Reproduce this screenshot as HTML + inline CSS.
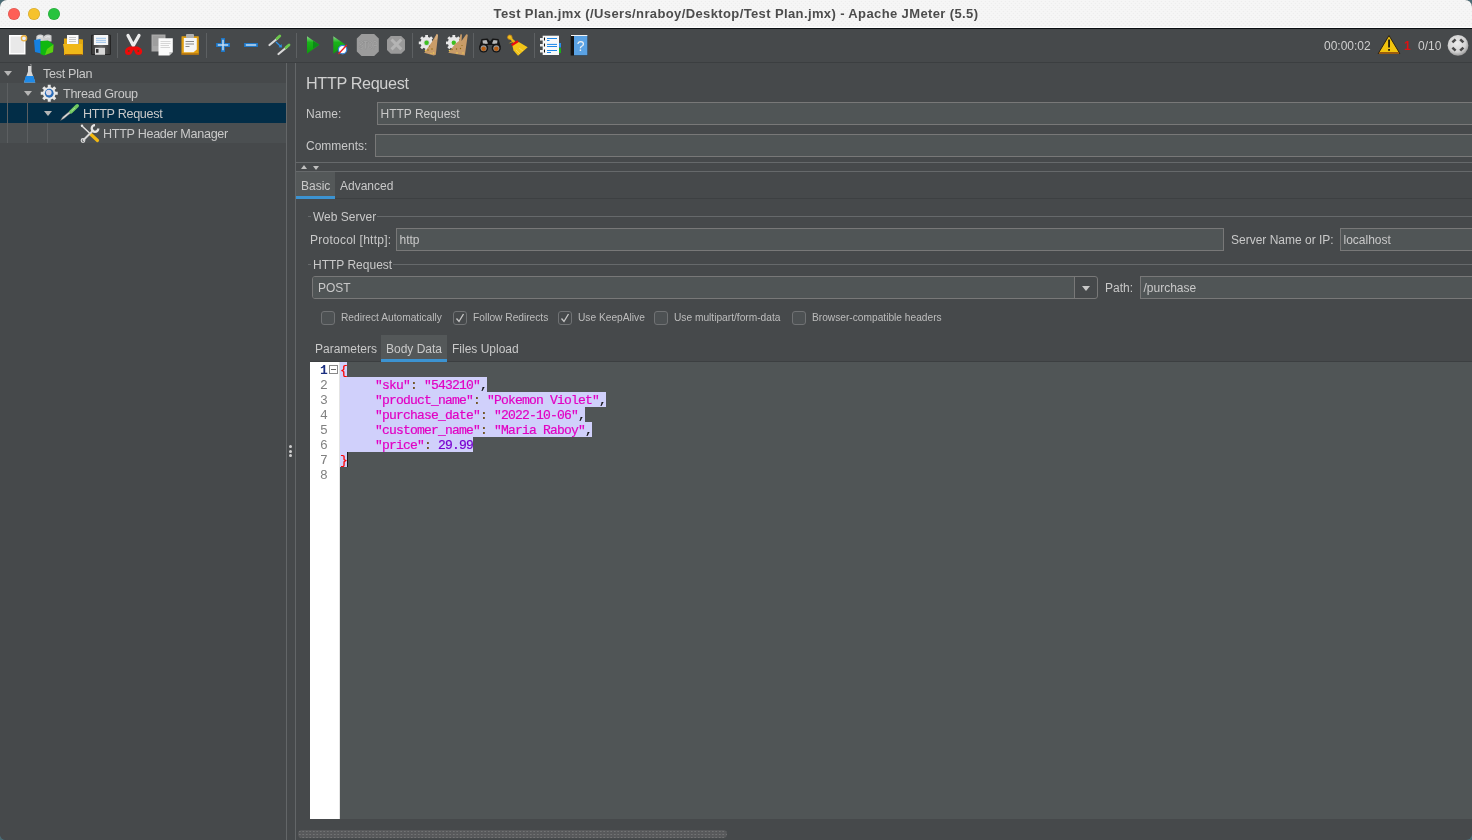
<!DOCTYPE html>
<html><head><meta charset="utf-8">
<style>
*{margin:0;padding:0;box-sizing:border-box}
html,body{width:1472px;height:840px;overflow:hidden;background:#4a6b75}
body{font-family:"Liberation Sans",sans-serif;color:#c9c9c9;position:relative}
.a{position:absolute}
#win{will-change:transform;position:absolute;left:0;top:0;width:1472px;height:840px;background:#46494b;border-radius:7px 7px 6px 6px;overflow:hidden}
#title{position:absolute;left:0;top:0;width:1472px;height:29px;background:radial-gradient(circle at 1.5px 1.5px,#ededed 0.6px,transparent 1.1px) 0 0/4px 4px,radial-gradient(circle at 1.5px 1.5px,#ededed 0.6px,transparent 1.1px) 2px 2px/4px 4px,#f6f6f6;border-bottom:1px solid #0b1013}
#title:after{content:"";position:absolute;left:0;top:27px;width:1472px;height:1px;background:#fff}
#title .t{position:absolute;left:0;width:1472px;top:6px;text-align:center;font-size:13px;font-weight:bold;color:#4c4c4c;letter-spacing:0.38px;white-space:nowrap}
.tl{position:absolute;top:8px;width:12px;height:12px;border-radius:50%;box-shadow:inset 0 0 0 0.6px rgba(0,0,0,0.14)}
#toolbar{position:absolute;left:0;top:29px;width:1472px;height:34px;background:#46494b;border-bottom:1px solid #3b3e40}
.sep{position:absolute;top:4px;width:1px;height:25px;background:#5d6062}
.ico{position:absolute;overflow:visible}
.tree{position:absolute;left:0;top:63px;width:286px;height:777px;background:#46494b}
.row{position:absolute;left:0;width:286px;height:20px}
.vl{position:absolute;width:1px;background:#5c5f61}
.tri{position:absolute;width:0;height:0;border-left:4px solid transparent;border-right:4px solid transparent;border-top:5px solid #b5b5b5}
.lbl{position:absolute;font-size:12px;line-height:14px;color:#c9c9c9;white-space:nowrap}
.tl2{font-size:12.6px;letter-spacing:-0.3px}
.fld{position:absolute;background:#505556;border:1px solid #787878;font-size:12px;line-height:21px;padding-top:1px;color:#c9c9c9;white-space:nowrap;padding-left:2.5px;overflow:hidden}
.cbl{position:absolute;font-size:10.2px;line-height:12px;color:#bdbdbd;white-space:nowrap;top:312px}
.cb{position:absolute;top:311px;width:14px;height:14px;border:1px solid #707274;border-radius:3px;background:#4d5153}
.hl{position:absolute;height:1px;background:#66696b}
.mono{font-family:"Liberation Mono",monospace;font-size:13px;letter-spacing:-0.8px;line-height:15px;white-space:pre}
.code{position:absolute;left:340px;color:#000;-webkit-text-stroke:0.2px}
.s{color:#e200c4;-webkit-text-stroke-color:#e200c4}
.n{color:#7800d0;-webkit-text-stroke-color:#7800d0}
.b{color:#ff0000;-webkit-text-stroke-color:#ff0000}
.p{color:#111;-webkit-text-stroke-color:#111}
.c{color:#6a4a12;-webkit-text-stroke-color:#6a4a12}
.sel{position:absolute;background:#d0d0fb;height:15px}
.ln{position:absolute;left:310px;width:17px;text-align:right;color:#808080}
</style></head><body>
<div id="win">
  <div id="title">
    <div class="tl" style="left:8px;background:#fe5f57"></div>
    <div class="tl" style="left:28px;background:#f6c22c"></div>
    <div class="tl" style="left:48px;background:#27c33f"></div>
    <div class="t">Test Plan.jmx (/Users/nraboy/Desktop/Test Plan.jmx) - Apache JMeter (5.5)</div>
  </div>
  <div id="toolbar">
    <div class="sep" style="left:117px"></div>
    <div class="sep" style="left:206px"></div>
    <div class="sep" style="left:296px"></div>
    <div class="sep" style="left:412px"></div>
    <div class="sep" style="left:473px"></div>
    <div class="sep" style="left:534px"></div>
    <!-- TOOLBAR ICONS -->
    <div class="lbl" style="left:1324px;top:10px;font-size:12px;color:#cfcfcf">00:00:02</div>
    <div class="lbl" style="left:1404px;top:10px;font-size:12px;color:#e01010;font-weight:bold">1</div>
    <div class="lbl" style="left:1418px;top:10px;font-size:12px;color:#cfcfcf">0/10</div>
  </div>
  <div class="tree">
    <div class="row" style="top:20px;background:#4b4f51"></div>
    <div class="row" style="top:40px;background:#022d47"></div>
    <div class="row" style="top:60px;background:#4b4f51"></div>
    <div class="vl" style="left:7px;top:20px;height:60px"></div>
    <div class="vl" style="left:27px;top:40px;height:40px"></div>
    <div class="vl" style="left:47px;top:60px;height:20px"></div>
    <div class="tri" style="left:4px;top:8px"></div>
    <div class="tri" style="left:24px;top:28px"></div>
    <div class="tri" style="left:44px;top:48px"></div>
    <!-- TREE ICONS -->
    <div class="lbl tl2" style="left:43px;top:4px">Test Plan</div>
    <div class="lbl tl2" style="left:63px;top:24px">Thread Group</div>
    <div class="lbl tl2" style="left:83px;top:44px">HTTP Request</div>
    <div class="lbl tl2" style="left:103px;top:64px">HTTP Header Manager</div>
  </div>
  <div class="a" style="left:286px;top:63px;width:1px;height:777px;background:#636668"></div>
  <div class="a" style="left:295px;top:63px;width:1px;height:777px;background:#636668"></div>
  <div class="a" style="left:289px;top:445px;width:3px;height:3px;border-radius:50%;background:#cfcfcf"></div>
  <div class="a" style="left:289px;top:450px;width:3px;height:3px;border-radius:50%;background:#cfcfcf"></div>
  <div class="a" style="left:289px;top:454px;width:3px;height:3px;border-radius:50%;background:#cfcfcf"></div>

  <!-- RIGHT PANEL -->
  <div class="lbl" style="left:306px;top:74px;font-size:16.2px;line-height:18px;letter-spacing:-0.35px;color:#d0d0d0">HTTP Request</div>
  <div class="lbl" style="left:306px;top:107px">Name:</div>
  <div class="fld" style="left:377px;top:102px;width:1100px;height:23px">HTTP Request</div>
  <div class="lbl" style="left:306px;top:139px">Comments:</div>
  <div class="fld" style="left:375px;top:134px;width:1100px;height:23px"></div>
  <div class="hl" style="left:296px;top:162px;width:1176px"></div>
  <div class="a" style="left:301px;top:165px;width:0;height:0;border-left:3.5px solid transparent;border-right:3.5px solid transparent;border-bottom:4px solid #c0c0c0"></div>
  <div class="a" style="left:313px;top:166px;width:0;height:0;border-left:3.5px solid transparent;border-right:3.5px solid transparent;border-top:4px solid #c0c0c0"></div>
  <div class="hl" style="left:296px;top:171px;width:1176px"></div>
  <div class="a" style="left:296px;top:198px;width:1176px;height:1px;background:#3d4042"></div>
  <div class="a" style="left:296px;top:172px;width:39px;height:27px;background:#545859"></div>
  <div class="a" style="left:296px;top:196px;width:39px;height:3px;background:#3c93d1"></div>
  <div class="lbl" style="left:301px;top:179px">Basic</div>
  <div class="lbl" style="left:340px;top:179px">Advanced</div>

  <div class="hl" style="left:308px;top:216px;width:3px"></div>
  <div class="hl" style="left:377px;top:216px;width:1095px"></div>
  <div class="lbl" style="left:313px;top:210px">Web Server</div>
  <div class="lbl" style="left:310px;top:233px;letter-spacing:0.25px">Protocol [http]:</div>
  <div class="fld" style="left:396px;top:228px;width:828px;height:23px">http</div>
  <div class="lbl" style="left:1231px;top:233px">Server Name or IP:</div>
  <div class="fld" style="left:1340px;top:228px;width:200px;height:23px">localhost</div>

  <div class="hl" style="left:308px;top:264px;width:3px"></div>
  <div class="hl" style="left:393px;top:264px;width:1079px"></div>
  <div class="lbl" style="left:313px;top:258px">HTTP Request</div>
  <div class="a" style="left:312px;top:276px;width:786px;height:23px;border:1px solid #787878;border-radius:3px;background:#46494b;overflow:hidden">
    <div class="a" style="left:0;top:0;width:762px;height:21px;background:#505556;border-right:1px solid #787878"></div>
    <div class="a" style="left:5px;top:4px;font-size:12px;line-height:14px;color:#c9c9c9">POST</div>
    <div class="a" style="left:769px;top:9px;width:0;height:0;border-left:4.5px solid transparent;border-right:4.5px solid transparent;border-top:5px solid #c8c8c8"></div>
  </div>
  <div class="lbl" style="left:1105px;top:281px">Path:</div>
  <div class="fld" style="left:1140px;top:276px;width:400px;height:23px">/purchase</div>

  <div class="cb" style="left:321px"></div>
  <div class="cbl" style="left:341px">Redirect Automatically</div>
  <div class="cb" style="left:453px;background:#46494b"></div>
  <div class="cbl" style="left:473px">Follow Redirects</div>
  <div class="cb" style="left:558px;background:#46494b"></div>
  <div class="cbl" style="left:578px">Use KeepAlive</div>
  <div class="cb" style="left:654px"></div>
  <div class="cbl" style="left:674px">Use multipart/form-data</div>
  <div class="cb" style="left:792px"></div>
  <div class="cbl" style="left:812px">Browser-compatible headers</div>
  <svg class="a" style="left:453px;top:311px" width="14" height="14"><path d="M3.5 7.5 L6 10.5 L10.5 3" fill="none" stroke="#c8c8c8" stroke-width="1.3"/></svg>
  <svg class="a" style="left:558px;top:311px" width="14" height="14"><path d="M3.5 7.5 L6 10.5 L10.5 3" fill="none" stroke="#c8c8c8" stroke-width="1.3"/></svg>

  <div class="a" style="left:310px;top:361px;width:1162px;height:1px;background:#3c3f41"></div>
  <div class="a" style="left:381px;top:335px;width:66px;height:27px;background:#545859"></div>
  <div class="a" style="left:381px;top:359px;width:66px;height:3px;background:#3c93d1"></div>
  <div class="lbl" style="left:315px;top:342px">Parameters</div>
  <div class="lbl" style="left:386px;top:342px">Body Data</div>
  <div class="lbl" style="left:452px;top:342px">Files Upload</div>

  <!-- EDITOR -->
  <div class="a" style="left:310px;top:362px;width:1162px;height:457px;background:#505556"></div>
  <div class="a" style="left:310px;top:362px;width:30px;height:457px;background:#ffffff;border-right:1px solid #e4e4e4"></div>
  <div class="sel" style="left:340px;top:362px;width:7px"></div>
  <div class="sel" style="left:340px;top:377px;width:147px"></div>
  <div class="sel" style="left:340px;top:392px;width:266px"></div>
  <div class="sel" style="left:340px;top:407px;width:245px"></div>
  <div class="sel" style="left:340px;top:422px;width:252px"></div>
  <div class="sel" style="left:340px;top:437px;width:133px"></div>
  <div class="sel" style="left:340px;top:452px;width:7px"></div>
  <div class="mono ln" style="top:363px;color:#1b2f80;font-weight:bold">1</div>
  <div class="mono ln" style="top:378px">2</div>
  <div class="mono ln" style="top:393px">3</div>
  <div class="mono ln" style="top:408px">4</div>
  <div class="mono ln" style="top:423px">5</div>
  <div class="mono ln" style="top:438px">6</div>
  <div class="mono ln" style="top:453px">7</div>
  <div class="mono ln" style="top:468px">8</div>
  <div class="a" style="left:329px;top:365px;width:9px;height:9px;border:1px solid #8a8a8a;background:#fff"></div>
  <div class="a" style="left:331px;top:369px;width:5px;height:1px;background:#6a6a6a"></div>
  <div class="mono code" style="top:363px"><span class="b">{</span></div>
  <div class="mono code" style="top:378px">     <span class="s">"sku"</span><span class="c">: </span><span class="s">"543210"</span><span class="p">,</span></div>
  <div class="mono code" style="top:393px">     <span class="s">"product_name"</span><span class="c">: </span><span class="s">"Pokemon Violet"</span><span class="p">,</span></div>
  <div class="mono code" style="top:408px">     <span class="s">"purchase_date"</span><span class="c">: </span><span class="s">"2022-10-06"</span><span class="p">,</span></div>
  <div class="mono code" style="top:423px">     <span class="s">"customer_name"</span><span class="c">: </span><span class="s">"Maria Raboy"</span><span class="p">,</span></div>
  <div class="mono code" style="top:438px">     <span class="s">"price"</span><span class="c">: </span><span class="n">29.99</span></div>
  <div class="mono code" style="top:453px"><span class="b">}</span></div>
  <div class="a" style="left:347px;top:452px;width:1px;height:15px;background:#1a1a1a"></div>

  <svg class="a" style="left:0;top:0" width="1472" height="150" viewBox="0 0 1472 150">
<defs>
<linearGradient id="gPlay" x1="0" y1="0" x2="0" y2="1"><stop offset="0" stop-color="#8fd88f"/><stop offset="0.35" stop-color="#19b419"/><stop offset="1" stop-color="#0f9a0f"/></linearGradient>
<radialGradient id="gCirc" cx="0.45" cy="0.4" r="0.6"><stop offset="0" stop-color="#ececec"/><stop offset="0.7" stop-color="#d2d2d2"/><stop offset="1" stop-color="#9a9a9a"/></radialGradient>
</defs>
<!-- New -->
<rect x="9" y="35" width="16.5" height="19.5" fill="#ffffff"/>
<rect x="10.5" y="36.5" width="13.5" height="16.5" fill="#e9e9e9"/>
<circle cx="24" cy="38.3" r="2.6" fill="#e8f0ff" stroke="#e8b040" stroke-width="1.4"/>
<!-- Templates -->
<path d="M36 41 L36.5 36 Q40 33.5 43.5 35.5 L44.5 41 Z" fill="#d4d4d4"/>
<path d="M43.5 41 L44 36 Q47.5 33.5 51.5 35.5 L51.5 41.5 Z" fill="#cdcdcd"/>
<path d="M38 37.5 Q40 36 42.5 37 M45.5 37.5 Q47.5 36 50 37" stroke="#f2f2f2" stroke-width="0.8" fill="none"/>
<path d="M34 40 L40.5 39 L41 53.5 L35 52 Z" fill="#1580e0"/>
<path d="M40.5 41 L48 40.5 L53.5 44.5 L53 52 L44 55.5 L40.5 54 Z" fill="#10b810"/>
<path d="M47 49 L53.5 44.5 L53 52 L45 55 Z" fill="#5cd010"/>
<!-- Open -->
<path d="M64 38.5 L67 38.5 L67 44 L79 44 L79 39 L83 39.5 L83 54.5 L64 55 Z" fill="#e2a810"/>
<rect x="67" y="35" width="11.5" height="9" fill="#fafafa"/>
<path d="M69 37.5 H76 M69 39.5 H76 M69 41.5 H76" stroke="#bbb" stroke-width="0.8"/>
<path d="M63 44 L82 44 L82.5 54.5 L65 55 Z" fill="#f0b818"/>
<path d="M65 54 L82 54 L82 55.3 L65 55.3 Z" fill="#9a5a10"/>
<!-- Save -->
<linearGradient id="gFl" x1="0" y1="0" x2="1" y2="0"><stop offset="0" stop-color="#3a3a3a"/><stop offset="0.5" stop-color="#666"/><stop offset="1" stop-color="#3a3a3a"/></linearGradient>
<rect x="91" y="34.8" width="20" height="20.2" rx="1" fill="#262626"/>
<rect x="92" y="35.8" width="18" height="18.2" fill="url(#gFl)"/>
<rect x="93.8" y="35" width="14.4" height="10" fill="#f6f6f6"/>
<path d="M96 38.3 H106 M96 40.3 H106 M96 42.3 H106" stroke="#8ebbe8" stroke-width="0.9"/>
<rect x="95" y="47.8" width="10" height="7" fill="#d8d8d8"/>
<rect x="96" y="49" width="2.5" height="3.8" fill="#333"/>
<!-- Cut -->
<path d="M128 35.5 L133.3 45.5 M139 35.5 L133.3 45.5" stroke="#ececec" stroke-width="3.3" stroke-linecap="round"/>
<path d="M129.5 46.5 L137.5 46.5 Q142.2 48 142.2 51.5 Q141.8 55 138.5 55 Q135.5 55 134.6 51.5 L133.5 49.5 L132.4 51.5 Q131.5 55 128.5 55 Q125 55 125 51.5 Q125 48 129.5 46.5 Z" fill="#ee0a0a"/>
<circle cx="128.8" cy="51" r="1" fill="#6a4010"/>
<circle cx="138.3" cy="51" r="1" fill="#6a4010"/>
<!-- Copy -->
<rect x="151.5" y="34.5" width="14" height="17" fill="#a8a8a8"/>
<path d="M153 37 H164 M153 39 H164 M153 41 H164 M153 43 H164 M153 45 H164" stroke="#8c8c8c" stroke-width="0.7"/>
<path d="M158.5 38.2 L172.8 38.2 L172.8 52 L169.3 55.5 L158.5 55.5 Z" fill="#fafafa"/>
<path d="M169.3 55.5 L169.3 52 L172.8 52 Z" fill="#c8c8c8"/>
<path d="M160.5 41.5 H170.5 M160.5 43.5 H170.5 M160.5 45.5 H169 M160.5 47.5 H170" stroke="#c4c4c4" stroke-width="0.7"/>
<!-- Paste -->
<rect x="181.5" y="36.2" width="17.3" height="18.5" rx="0.5" fill="#e29f10"/>
<path d="M181.5 54 H198.8" stroke="#9a5a10" stroke-width="1"/>
<path d="M183.8 38 L196.8 38 L196.8 49.5 L193.5 52.3 L183.8 52.3 Z" fill="#f6f6f6"/>
<rect x="186" y="34" width="8" height="4" rx="1" fill="#b0b0b0"/>
<path d="M185.5 41.5 H194 M185.5 44 H194 M185.5 46.5 H189.5" stroke="#8a8a8a" stroke-width="1"/>
<!-- Plus / Minus -->
<path d="M218 45 H228 M223 40 V50" stroke="#1f78c8" stroke-width="3.9" stroke-linecap="square"/>
<path d="M246 45 H256" stroke="#1f78c8" stroke-width="3.9" stroke-linecap="square"/>
<path d="M217.8 45 H228.2 M223 39.8 V50.2" stroke="#c4dcf2" stroke-width="1.5"/>
<path d="M245.8 45 H256.2" stroke="#c4dcf2" stroke-width="1.5"/>
<!-- Toggle pipettes -->
<path d="M269.5 45 L278 38" stroke="#d8d8d8" stroke-width="2.2" stroke-linecap="round"/>
<path d="M277 38.5 L279.8 36" stroke="#6cc84c" stroke-width="2.8" stroke-linecap="round"/>
<path d="M278.5 54 L287 47" stroke="#d8d8d8" stroke-width="2.2" stroke-linecap="round"/>
<path d="M286 47.5 L289 45" stroke="#6cc84c" stroke-width="2.8" stroke-linecap="round"/>
<path d="M276 42 L280.5 46.3" stroke="#2a90e8" stroke-width="1.2"/>
<path d="M278.5 47.2 L282 47.5 L281.5 44 Z" fill="#2a90e8"/>
<!-- Start -->
<path d="M307 36.2 L319.2 44.8 L307 53.8 Z" fill="url(#gPlay)"/>
<path d="M313 48.5 L319.2 44.8 L313 41 Z" fill="#0c8a18"/>
<!-- Start no pauses -->
<path d="M333.3 36.2 L345.5 44.8 L333.3 53.8 Z" fill="url(#gPlay)"/>
<circle cx="342.6" cy="49.6" r="4.2" fill="#ffffff" stroke="#3a86d8" stroke-width="1.2"/>
<path d="M338.5 54 L346.8 45" stroke="#ee2020" stroke-width="1.3"/>
<!-- Stop -->
<path d="M361.5 34 L374.2 34 L378.8 38.6 L378.8 51.4 L374.2 56 L361.5 56 L356.8 51.4 L356.8 38.6 Z" fill="#9c9c9c"/>
<text x="368" y="49.4" text-anchor="middle" font-family="Liberation Sans" font-weight="bold" font-size="11.5" fill="#aaaaaa" stroke="#8c8c8c" stroke-width="0.5" letter-spacing="-0.9" textLength="18.5" lengthAdjust="spacingAndGlyphs">STOP</text>
<!-- Shutdown -->
<path d="M390.8 36 L401.2 36 L405 39.8 L405 50 L401.2 53.8 L390.8 53.8 L387 50 L387 39.8 Z" fill="#9a9a9a"/>
<path d="M391.5 39.5 L401.3 49.4 M401.3 39.5 L391.5 49.4" stroke="#b4b4b4" stroke-width="3"/>
<!-- Clear -->
<circle cx="426.6" cy="42.8" r="6" fill="#e8e8e8"/>
<g stroke="#e8e8e8" stroke-width="2.8"><path d="M426.6 35 V50.6 M418.8 42.8 H434.4 M421.1 37.3 L432.1 48.3 M432.1 37.3 L421.1 48.3"/></g>
<circle cx="426.6" cy="42.8" r="3" fill="#cfcfcf"/>
<circle cx="426.6" cy="42.8" r="2.2" fill="#3cc020"/>
<path d="M436.5 34.3 L438 34.8 L437.5 40 L435.8 54.8 L433.8 55.4 L424.2 52.7 L431.5 42.5 Z" fill="#c99c68"/>
<path d="M436.5 34.3 L438 34.8 L437 39.5 L434.5 40 Z" fill="#d8b080"/>
<g fill="#8a6a10"><circle cx="428" cy="50" r="0.7"/><circle cx="432" cy="49" r="0.7"/><circle cx="429.5" cy="46" r="0.6"/></g>
<g fill="#f0d050"><circle cx="425.5" cy="50.5" r="0.8"/><circle cx="433.5" cy="53" r="0.8"/><circle cx="431" cy="53.5" r="0.6"/></g>
<!-- Clear all -->
<circle cx="453.8" cy="42.8" r="6" fill="#e8e8e8"/>
<g stroke="#e8e8e8" stroke-width="2.8"><path d="M453.8 35 V50.6 M446 42.8 H461.6 M448.3 37.3 L459.3 48.3 M459.3 37.3 L448.3 48.3"/></g>
<circle cx="453.8" cy="42.8" r="2.2" fill="#3cc020"/>
<path d="M460.5 34.3 L462 34.6 L461.5 41 L466.3 34.3 L467.8 34.8 L464.8 55.4 L448.3 52.7 L455.5 43.5 L459 41 Z" fill="#c99c68"/>
<g fill="#8a6a10"><circle cx="452" cy="49.5" r="0.7"/><circle cx="456.5" cy="49" r="0.7"/><circle cx="460.5" cy="48.5" r="0.7"/><circle cx="462" cy="45.5" r="0.6"/></g>
<g fill="#f0d050"><circle cx="449.5" cy="50.5" r="0.8"/><circle cx="457" cy="53" r="0.8"/><circle cx="463" cy="53" r="0.7"/></g>
<!-- Binoculars -->
<path d="M481.5 39 L487.5 38.5 L490 41.5 L492.5 38.5 L498.5 39 L500.8 47 L497 45 L490 45 L483 45 L479.2 47 Z" fill="#151515"/>
<path d="M482.5 40.5 L486.5 40 L488 43.5 L483 44.5 Z" fill="#b8b8b8"/>
<path d="M493.5 40 L497.5 40.5 L497 44.5 L492 43.5 Z" fill="#b8b8b8"/>
<circle cx="483.6" cy="48" r="4.6" fill="#151515"/>
<circle cx="496.3" cy="48" r="4.6" fill="#151515"/>
<circle cx="483.6" cy="48.3" r="3" fill="#9a9a9a"/>
<circle cx="496.3" cy="48.3" r="3" fill="#9a9a9a"/>
<circle cx="483.6" cy="48.8" r="2.3" fill="#b85e12"/>
<circle cx="496.3" cy="48.8" r="2.3" fill="#b85e12"/>
<!-- Broom -->
<circle cx="509.8" cy="37.2" r="2.3" fill="#f0c020" stroke="#b87818" stroke-width="0.8"/>
<path d="M510.5 38 L515 43" stroke="#e8b818" stroke-width="2.2"/>
<path d="M508.5 43.5 L514 40 L515 41.5 Z" fill="#e8b010"/>
<path d="M511 44.2 L517.3 40.2 L519 42.5 L512.8 46.5 Z" fill="#e80a10"/>
<path d="M512.5 46 L518.8 42 L527.7 47.2 L518 55.7 L513.5 50.5 Z" fill="#f2c418"/>
<path d="M519 48 L523 51 M516 50 L520 54" stroke="#f8dc70" stroke-width="0.7"/>
<!-- Function helper -->
<rect x="542.7" y="35.7" width="16.3" height="19.3" fill="#f8f8f8"/>
<rect x="559" y="43" width="2" height="4.5" fill="#2a8ee8"/>
<rect x="559" y="48" width="2" height="5" fill="#18b018"/>
<g fill="#e8e8e8"><rect x="540" y="38" width="4" height="2.5"/><rect x="540" y="44" width="4" height="2.5"/><rect x="540" y="50" width="4" height="2.5"/></g>
<g fill="#111"><rect x="544" y="37.5" width="1" height="3"/><rect x="544" y="43.5" width="1" height="3"/><rect x="544" y="49.5" width="1" height="3"/></g>
<path d="M547 38.5 H557 M547 40.5 H549.5 M547 44.4 H557 M547 46.5 H557 M547 50.5 H557 M547 52.5 H551" stroke="#1a86e8" stroke-width="1"/>
<!-- Help -->
<rect x="570.7" y="35" width="16.7" height="20.5" fill="#141414"/>
<rect x="574" y="35.8" width="13.4" height="19.5" fill="#5aa2e4"/>
<rect x="571" y="35" width="16.4" height="1" fill="#f4f4f4"/>
<text x="580.6" y="50.5" text-anchor="middle" font-family="Liberation Sans" font-size="14" fill="#f0f0f0">?</text>
<!-- Warning -->
<path d="M1389 35.5 L1399.8 53.5 L1378.2 53.5 Z" fill="#f2c40e" stroke="#2a2010" stroke-width="1" stroke-linejoin="round"/>
<rect x="1379" y="52" width="20" height="2" fill="#9a5a10"/>
<rect x="1388.2" y="39.5" width="1.7" height="8" fill="#111"/>
<rect x="1388.2" y="49" width="1.7" height="1.8" fill="#111"/>
<!-- Circle -->
<circle cx="1458" cy="45.4" r="10.4" fill="url(#gCirc)"/>
<g stroke="#4a4a4a" stroke-width="2.6"><path d="M1452.4 42.4 L1455.6 39.4 M1460.2 39.4 L1463.4 42.4 M1452.4 47.6 L1455.6 50.6 M1460.2 50.6 L1463.4 47.6"/></g>

<!-- TREE ICONS -->
<!-- flask -->
<path d="M28 66 L31.5 66 L31.5 71.5 L35.3 82.5 L24 82.5 L28 71.5 Z" fill="#d6d6d6"/>
<path d="M29.5 64.5 L31.5 64.2 L31.5 66 Z" fill="#aaa"/>
<path d="M25.8 76 L33.5 76 L35.3 82.5 L24 82.5 Z" fill="#1e8ae8"/>
<!-- gear -->
<g transform="translate(49.25 93.25)">
<circle r="6.3" fill="#e8e8e8"/>
<g stroke="#e8e8e8" stroke-width="3"><path d="M0 -8.5 V8.5 M-8.5 0 H8.5 M-6 -6 L6 6 M6 -6 L-6 6"/></g>
<circle r="4.4" fill="#2a6cb8"/>
<circle r="2.8" cx="-0.5" cy="-0.8" fill="#d8d8e8"/>
</g>
<!-- pipette -->
<path d="M60.5 120.5 L62.5 117 L70.5 110.5 L72 112 L64 118.5 Z" fill="#d8d8d8" stroke="#555" stroke-width="0.5"/>
<path d="M71 111.8 L77.2 105.8" stroke="#70c860" stroke-width="3.6" stroke-linecap="round"/>
<path d="M71.5 111 L75 108" stroke="#a8e098" stroke-width="1"/>
<!-- wrench & screwdriver -->
<circle cx="82" cy="125.8" r="1.2" fill="#e8e8e8"/>
<path d="M82 126 L90.5 134" stroke="#e0e0e0" stroke-width="1.5" stroke-linecap="round"/>
<path d="M90.5 134 L97.5 140.5" stroke="#f2b810" stroke-width="3.2" stroke-linecap="round"/>
<path d="M83.5 140 L93 130.5" stroke="#d8d8d8" stroke-width="2" stroke-linecap="round"/>
<circle cx="83" cy="140.5" r="1.8" fill="none" stroke="#d8d8d8" stroke-width="1.2"/>
<path d="M95 125.2 A3.3 3.3 0 1 0 98.3 128.5" fill="none" stroke="#e4e4e4" stroke-width="2.3"/>
</svg>

  <!-- SCROLLBAR -->
  <div class="a" style="left:298px;top:830px;width:429px;height:8px;border-radius:4px;background:radial-gradient(circle at 1.5px 1.5px,#727374 0.7px,transparent 1px) 0 0/3.5px 3px,#58595b"></div>
</div>
</body></html>
